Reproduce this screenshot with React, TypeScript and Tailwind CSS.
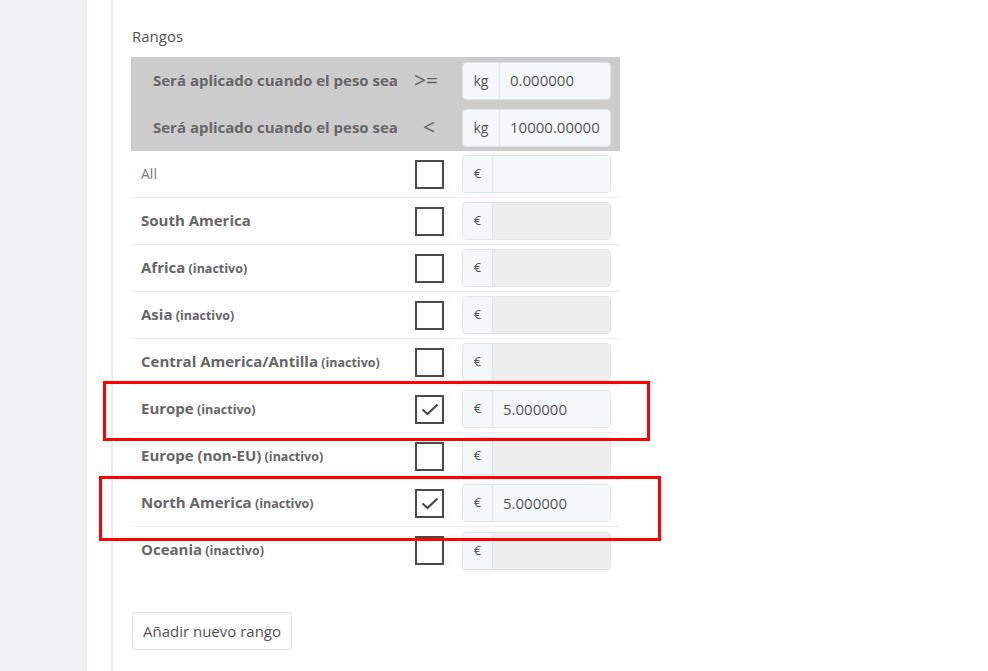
import React from "react";

interface Zone {
  name: string;
  inactive: boolean;
  checked: boolean;
  value: string;
  bold: boolean;
}

const zones: Zone[] = [
  { name: "All", inactive: false, checked: false, value: "", bold: false },
  { name: "South America", inactive: false, checked: false, value: "", bold: true },
  { name: "Africa", inactive: true, checked: false, value: "", bold: true },
  { name: "Asia", inactive: true, checked: false, value: "", bold: true },
  { name: "Central America/Antilla", inactive: true, checked: false, value: "", bold: true },
  { name: "Europe", inactive: true, checked: true, value: "5.000000", bold: true },
  { name: "Europe (non-EU)", inactive: true, checked: false, value: "", bold: true },
  { name: "North America", inactive: true, checked: true, value: "5.000000", bold: true },
  { name: "Oceania", inactive: true, checked: false, value: "", bold: true },
];

function Checkbox({ checked }: { checked: boolean }) {
  return (
    <div className="w-[29px] h-[29px] border-2 border-[#4a4a4a] bg-white flex items-center justify-center">
      {checked && (
        <svg width="20" height="16" viewBox="0 0 20 16">
          <path d="M2.5 8.5 L7.5 13 L17.5 3.5" fill="none" stroke="#4a4a4a" strokeWidth="2.2" />
        </svg>
      )}
    </div>
  );
}

function InputGroup({ unit, value, disabled, wide }: { unit: string; value: string; disabled: boolean; wide?: boolean }) {
  return (
    <div className="flex h-[38px] w-[149px] rounded-[4px] border border-[#dbe6e9] overflow-hidden">
      <div className={`${wide ? "w-[37px] text-[14px]" : "w-[30px] text-[13px]"} flex items-center justify-center bg-[#f5f8f9] border-r border-[#dbe6e9] text-[#555]`}>
        {unit}
      </div>
      <div className={`flex-1 flex items-center pl-[10px] text-[15px] text-[#555] ${disabled ? "bg-[#eeeeee]" : "bg-[#f5f8f9]"}`}>
        {value}
      </div>
    </div>
  );
}

export default function App() {
  return (
    <div className="relative flex w-[988px] h-[671px] overflow-hidden bg-white" style={{ fontFamily: '"Open Sans", sans-serif' }}>
      <div className="w-[87px] h-full bg-[#eff1f2]"></div>
      <div className="ml-[24px] h-full border-l-2 border-[#ececec] pl-[18px]">
        <div className="pt-[25px] text-[15px] text-[#555] leading-[22px] pl-[1px]">Rangos</div>

        <div className="mt-[10px] w-[489px]">
          <div className="bg-[#cccccc]">
            <div className="flex items-center h-[47px]">
              <div className="w-[276px] pl-[22px] text-[15px] font-bold text-[#666]">Será aplicado cuando el peso sea</div>
              <div className="w-[55px] pl-[7px] text-[21px] leading-none text-[#666]">&gt;=</div>
              <InputGroup unit="kg" value="0.000000" disabled={false} wide />
            </div>
            <div className="flex items-center h-[47px]">
              <div className="w-[276px] pl-[22px] text-[15px] font-bold text-[#666]">Será aplicado cuando el peso sea</div>
              <div className="w-[55px] pl-[16px] text-[21px] leading-none text-[#666]">&lt;</div>
              <InputGroup unit="kg" value="10000.00000" disabled={false} wide />
            </div>
          </div>

          {zones.map((z, i) => (
            <div key={i} className={`flex items-center h-[47px] ${i < zones.length - 1 ? "border-b border-[#eeeeee]" : ""}`}>
              <div className="w-[284px] pl-[10px] pb-[3px] text-[#666]">
                {z.bold ? (
                  <span className="text-[15px] font-bold">
                    {z.name}
                    {z.inactive && <span className="text-[12.5px] font-bold"> (inactivo)</span>}
                  </span>
                ) : (
                  <span className="text-[14px] text-[#777]">{z.name}</span>
                )}
              </div>
              <div className="w-[47px]">
                <Checkbox checked={z.checked} />
              </div>
              <InputGroup unit="€" value={z.value} disabled={i > 0 && !z.checked} />
            </div>
          ))}
        </div>

        <button className="mt-[38px] ml-[1px] h-[38px] w-[160px] rounded-[3px] border border-[#e2e2e2] bg-white text-[15px] text-[#555]">
          Añadir nuevo rango
        </button>
      </div>

      <div className="absolute left-[103px] top-[381px] w-[547px] h-[60px] border-[3px] border-[#ff0000]"></div>
      <div className="absolute left-[99px] top-[476px] w-[562px] h-[65px] border-[3px] border-[#ff0000]"></div>
    </div>
  );
}
